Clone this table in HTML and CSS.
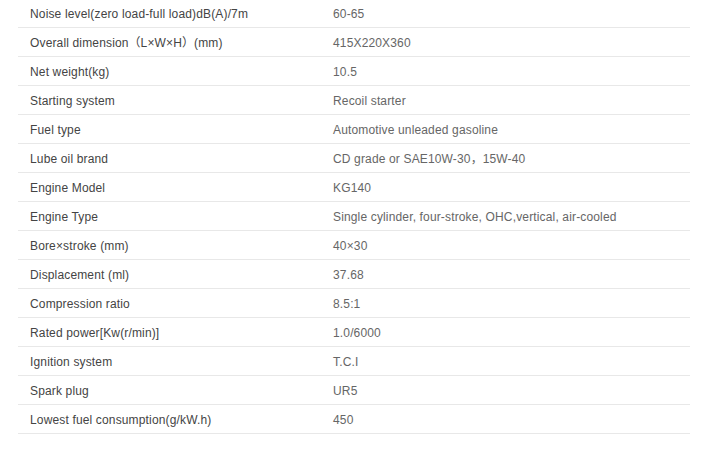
FILE: index.html
```html
<!DOCTYPE html>
<html>
<head>
<meta charset="utf-8">
<link rel="stylesheet" href="styles.css">
</head>
<body>
<div class="wrap">
<table class="spec">
<tr><td class="k">Noise level(zero load-full load)dB(A)/7m</td><td class="v">60-65</td></tr>
<tr><td class="k">Overall dimension<span class="cjk">（</span>L×W×H<span class="cjk">）</span>(mm)</td><td class="v">415X220X360</td></tr>
<tr><td class="k">Net weight(kg)</td><td class="v">10.5</td></tr>
<tr><td class="k">Starting system</td><td class="v">Recoil starter</td></tr>
<tr><td class="k">Fuel type</td><td class="v">Automotive unleaded gasoline</td></tr>
<tr><td class="k">Lube oil brand</td><td class="v">CD grade or SAE10W-30<span class="cjk">，</span>15W-40</td></tr>
<tr><td class="k">Engine Model</td><td class="v">KG140</td></tr>
<tr><td class="k">Engine Type</td><td class="v">Single cylinder, four-stroke, OHC,vertical, air-cooled</td></tr>
<tr><td class="k">Bore×stroke (mm)</td><td class="v">40×30</td></tr>
<tr><td class="k">Displacement (ml)</td><td class="v">37.68</td></tr>
<tr><td class="k">Compression ratio</td><td class="v">8.5:1</td></tr>
<tr><td class="k">Rated power[Kw(r/min)]</td><td class="v">1.0/6000</td></tr>
<tr><td class="k">Ignition system</td><td class="v">T.C.I</td></tr>
<tr><td class="k">Spark plug</td><td class="v">UR5</td></tr>
<tr><td class="k">Lowest fuel consumption(g/kW.h)</td><td class="v">450</td></tr>
</table>
</div>
</body>
</html>
```
FILE: styles.css
```css
html, body {
  margin: 0;
  padding: 0;
  background: #fff;
}
.wrap {
  margin-top: -1px;
  padding-left: 18px;
}
.spec {
  width: 672px;
  border-collapse: collapse;
  font-family: "Liberation Sans", Arial, sans-serif;
  font-size: 12px;
  line-height: 14px;
  letter-spacing: 0.15px;
}
.spec td {
  height: 26px;
  padding: 2px 0 0 12px;
  border-bottom: 1px solid #e8e8e8;
  vertical-align: middle;
  white-space: nowrap;
}
.spec td.k {
  width: 291px;
  color: #444;
}
.spec td.v {
  color: #666;
}
.cjk {
  font-family: "Noto Sans CJK SC", "Liberation Sans", sans-serif;
  line-height: 1;
  letter-spacing: 0;
}
```
